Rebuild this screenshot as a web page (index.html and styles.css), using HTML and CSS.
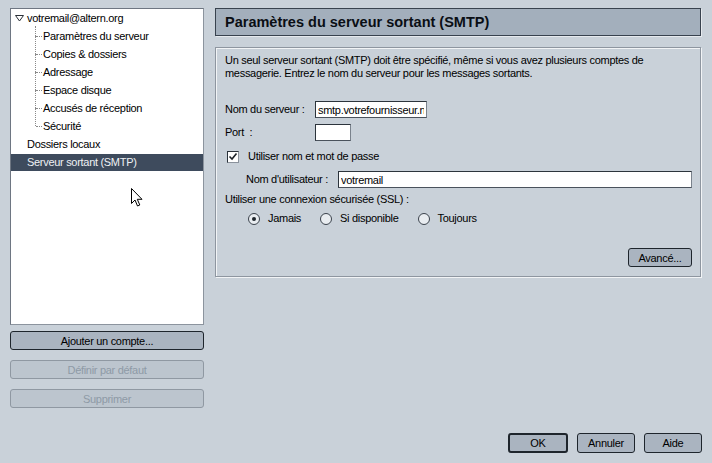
FILE: index.html
```html
<!DOCTYPE html>
<html lang="fr">
<head>
    <meta charset="UTF-8">
    <title>Paramètres des comptes</title>
    <link rel="stylesheet" href="styles.css">
</head>
<body>
    <div class="window">
        <div class="main">
            <!-- Account tree and account buttons -->
            <div class="sidebar">
                <div class="tree">
                    <div class="tree-row account">
                        <svg class="twisty" width="9" height="7" viewBox="0 0 9 7">
                            <path d="M0.5 0.5 L8.5 0.5 L4.5 6 Z" fill="none" stroke="#2a3038" stroke-width="1"/>
                        </svg>
                        votremail@altern.org
                    </div>
                    <ul class="tree-children">
                        <li>Paramètres du serveur</li>
                        <li>Copies &amp; dossiers</li>
                        <li>Adressage</li>
                        <li>Espace disque</li>
                        <li>Accusés de réception</li>
                        <li>Sécurité</li>
                    </ul>
                    <div class="tree-row top">Dossiers locaux</div>
                    <div class="tree-row top selected">Serveur sortant (SMTP)</div>

                    <svg class="cursor" width="12" height="20" viewBox="0 0 12 20">
                        <path d="M0.5 0.5 L0.5 15.5 L4 12 L6.5 18 L8.8 17 L6.3 11.3 L11 11.3 Z" fill="#fff" stroke="#000" stroke-width="1"/>
                    </svg>
                </div>
                <button class="btn side-btn first">Ajouter un compte...</button>
                <button class="btn side-btn" disabled>Définir par défaut</button>
                <button class="btn side-btn" disabled>Supprimer</button>
            </div>

            <!-- SMTP settings panel -->
            <div class="panel">
                <div class="panel-header">Paramètres du serveur sortant (SMTP)</div>
                <div class="group">
                    <p class="intro">Un seul serveur sortant (SMTP) doit être spécifié, même si vous avez plusieurs comptes de messagerie. Entrez le nom du serveur pour les messages sortants.</p>

                    <div class="field">
                        <label class="field-label">Nom du serveur :</label>
                        <input class="text-input server" type="text" value="smtp.votrefournisseur.net">
                    </div>
                    <div class="field">
                        <label class="field-label">Port &nbsp;:</label>
                        <input class="text-input port" type="text" value="">
                    </div>

                    <div class="check-row">
                        <span class="checkbox">
                            <svg width="10" height="10" viewBox="0 0 10 10">
                                <path d="M1.5 4.5 L4 7 L8.5 1.5" fill="none" stroke="#1c2228" stroke-width="1.6"/>
                            </svg>
                        </span>
                        Utiliser nom et mot de passe
                    </div>
                    <div class="field user">
                        <label class="field-label">Nom d'utilisateur :</label>
                        <input class="text-input username" type="text" value="votremail">
                    </div>

                    <div class="ssl-label">Utiliser une connexion sécurisée (SSL) :</div>
                    <div class="radio-row">
                        <span class="radio-item"><span class="radio checked"></span>Jamais</span>
                        <span class="radio-item"><span class="radio"></span>Si disponible</span>
                        <span class="radio-item"><span class="radio"></span>Toujours</span>
                    </div>

                    <div class="group-actions">
                        <button class="btn advanced">Avancé...</button>
                    </div>
                </div>
            </div>
        </div>

        <div class="footer">
            <button class="btn dialog-btn default">OK</button>
            <button class="btn dialog-btn">Annuler</button>
            <button class="btn dialog-btn">Aide</button>
        </div>
    </div>
</body>
</html>
```

FILE: styles.css
```css
/* General Styles */
html, body {
    margin: 0;
    padding: 0;
    height: 100%;
}

body {
    font-family: 'Liberation Sans', Arial, sans-serif;
    font-size: 11px;
    line-height: 13px;
    letter-spacing: -0.3px;
    color: #000;
    background: #c9d1d9;
}

.window {
    height: 463px;
    box-sizing: border-box;
    padding: 8px 10px 10px 10px;
    display: flex;
    flex-direction: column;
}

.main {
    display: flex;
    gap: 11px;
}

/* Sidebar / tree */
.sidebar {
    width: 194px;
    display: flex;
    flex-direction: column;
}

.tree {
    position: relative;
    height: 317px;
    box-sizing: border-box;
    background: #fff;
    border: 1px solid #6e7682;
    border-right-color: #8c949e;
    border-bottom-color: #8c949e;
}

.tree-row {
    height: 18px;
    line-height: 18px;
    white-space: nowrap;
}

.tree-row.account {
    padding-left: 4px;
    display: flex;
    align-items: center;
}

.twisty {
    margin-right: 3px;
}

.tree-row.top {
    padding-left: 16px;
}

.tree-row.selected {
    background: #3e4b5d;
    color: #eef1f4;
    height: 17px;
    line-height: 17px;
    margin-top: 1px;
}

.tree-children {
    list-style: none;
    margin: 0;
    padding: 0 0 0 32px;
}

.tree-children li {
    position: relative;
    height: 18px;
    line-height: 18px;
    white-space: nowrap;
}

/* dotted connector lines */
.tree-children li::before {
    content: "";
    position: absolute;
    left: -7px;
    top: 9px;
    width: 6px;
    border-top: 1px dotted #8a8a8a;
}

.tree-children li::after {
    content: "";
    position: absolute;
    left: -8px;
    top: -9px;
    height: 18px;
    border-left: 1px dotted #8a8a8a;
}

.tree-children li:first-child::after {
    top: -1px;
    height: 10px;
}

.cursor {
    position: absolute;
    left: 120px;
    top: 179px;
}

/* Buttons */
.btn {
    font-family: 'Liberation Sans', Arial, sans-serif;
    font-size: 11px;
    letter-spacing: -0.3px;
    color: #000;
    background: #aab4c0;
    border: 1px solid #1e252c;
    border-radius: 3px;
    padding: 0;
    height: 19px;
    cursor: pointer;
}

.btn:disabled {
    color: #8e9aa6;
    background: #bcc5ce;
    border-color: #8f98a2;
    cursor: default;
}

.side-btn {
    width: 194px;
    margin-top: 10px;
}

.side-btn.first {
    margin-top: 6px;
}

/* Right panel */
.panel {
    flex: 1;
    margin-right: 1px;
    display: flex;
    flex-direction: column;
}

.panel-header {
    height: 28px;
    box-sizing: border-box;
    line-height: 26px;
    padding-left: 9px;
    background: #a3afbc;
    border: 1px solid #38424e;
    font-size: 14.5px;
    font-weight: bold;
    letter-spacing: 0;
    color: #0a0e14;
    box-shadow: 1px 1px 0 #e6eaee;
}

.group {
    margin-top: 11px;
    height: 230px;
    box-sizing: border-box;
    border: 1px solid #8e96a0;
    box-shadow: inset 1px 1px 0 #f2f4f6, 1px 1px 0 #f2f4f6;
    padding: 6px 8px 0 9px;
    display: flex;
    flex-direction: column;
}

.intro {
    margin: 0;
    padding-right: 30px;
}

.field {
    display: flex;
    align-items: center;
    margin-top: 6px;
}

.field:first-of-type {
    margin-top: 21px;
}

.field-label {
    width: 90px;
    flex-shrink: 0;
}

.text-input {
    font-family: 'Liberation Sans', Arial, sans-serif;
    font-size: 11px;
    letter-spacing: -0.3px;
    height: 17px;
    box-sizing: border-box;
    padding: 0 2px;
    background: #fff;
    border: 1px solid #2c343c;
    border-right-color: #7a828c;
    border-bottom-color: #4a525c;
    outline: none;
}

.text-input.server {
    width: 112px;
}

.text-input.port {
    width: 36px;
}

.field.user {
    margin-top: 8px;
    padding-left: 21px;
}

.field.user .field-label {
    width: 92px;
}

.text-input.username {
    flex: 1;
}

.check-row {
    display: flex;
    align-items: center;
    margin-top: 9px;
    padding-left: 2px;
}

.checkbox {
    width: 12px;
    height: 12px;
    box-sizing: border-box;
    margin-right: 9px;
    background: #fff;
    border: 1px solid #2a323a;
    border-right-color: #8a929c;
    border-bottom-color: #8a929c;
    display: flex;
    align-items: center;
    justify-content: center;
}

.ssl-label {
    margin-top: 5px;
}

.radio-row {
    display: flex;
    margin-top: 6px;
    padding-left: 23px;
}

.radio-item {
    display: flex;
    align-items: center;
    margin-right: 19px;
}

.radio {
    width: 12px;
    height: 12px;
    box-sizing: border-box;
    border-radius: 50%;
    border: 1px solid #3a424c;
    background: #e9edf1;
    margin-right: 8px;
    position: relative;
}

.radio.checked::after {
    content: "";
    position: absolute;
    left: 3px;
    top: 3px;
    width: 4px;
    height: 4px;
    border-radius: 50%;
    background: #1e252c;
}

.group-actions {
    margin-top: auto;
    margin-bottom: 9px;
    display: flex;
    justify-content: flex-end;
}

.advanced {
    width: 64px;
}

/* Dialog buttons */
.footer {
    margin-top: auto;
    display: flex;
    justify-content: flex-end;
    gap: 9px;
}

.dialog-btn {
    width: 58px;
    height: 20px;
}

.dialog-btn.default {
    width: 60px;
    border-width: 2px;
}
```
